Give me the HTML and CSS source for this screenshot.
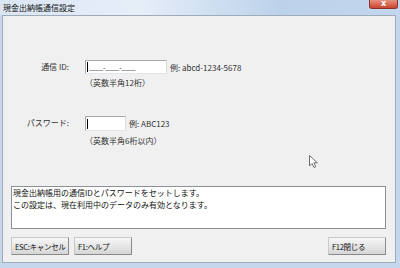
FILE: index.html
```html
<!DOCTYPE html>
<html lang="ja">
<head>
    <meta charset="UTF-8">
    <title>現金出納帳通信設定</title>
    <link rel="stylesheet" href="styles.css">
</head>
<body>
    <div class="window">
        <div class="titlebar">
            <span class="title">現金出納帳通信設定</span>
            <span class="close">x</span>
        </div>
        <div class="client">
            <div class="row row-id">
                <span class="label">通信 ID:</span>
                <div class="field">
                    <div class="line">
                        <span class="input input-id"><span class="caret"></span>____-____-____</span>
                        <span class="example">例: abcd-1234-5678</span>
                    </div>
                    <div class="hint">（英数半角12桁）</div>
                </div>
            </div>
            <div class="row row-pass">
                <span class="label">パスワード:</span>
                <div class="field">
                    <div class="line">
                        <span class="input input-pass"><span class="caret"></span></span>
                        <span class="example">例: ABC123</span>
                    </div>
                    <div class="hint">（英数半角6桁以内）</div>
                </div>
            </div>
            <div class="message">
                <div>現金出納帳用の通信IDとパスワードをセットします。</div>
                <div>この設定は、現在利用中のデータのみ有効となります。</div>
            </div>
            <div class="buttons">
                <button class="btn">ESC:キャンセル</button>
                <button class="btn">F1:ヘルプ</button>
                <span class="spacer"></span>
                <button class="btn">F12閉じる</button>
            </div>
        </div>
        <svg class="pointer" width="11" height="14" viewBox="0 0 11 14">
            <path d="M0.5 0.5 L0.5 11 L3 8.5 L5 12.5 L6.8 11.7 L4.9 7.8 L8.3 7.8 Z" fill="#fff" stroke="#6d6d6d" stroke-width="1"/>
        </svg>
    </div>
</body>
</html>
```

FILE: styles.css
```css
body {
    margin: 0;
    font-family: "Noto Sans CJK JP", "Noto Sans", sans-serif;
    font-size: 8px;
    color: #1e1e1e;
}
.window {
    position: relative;
    width: 400px;
    height: 268px;
    display: flex;
    flex-direction: column;
    background: #c5d7ec;
}
.titlebar {
    height: 15px;
    display: flex;
    justify-content: space-between;
    align-items: flex-start;
    background: linear-gradient(to right, #dbe6f3 0%, #e6eef8 35%, #d3e2f2 50%, #bcd2ea 70%, #c3d6ed 100%);
}
.title {
    margin: 3px 0 0 3px;
    font-size: 8px;
    line-height: 9px;
    color: #111;
}
.close {
    width: 29px;
    height: 9px;
    margin-right: 2px;
    box-sizing: border-box;
    border: 1px solid #8c3328;
    border-top: none;
    border-radius: 0 0 3px 3px;
    background: linear-gradient(#e7907f, #c9452f);
    color: #fff;
    font-family: "DejaVu Sans", sans-serif;
    font-size: 8px;
    font-weight: bold;
    line-height: 7px;
    text-align: center;
}
.client {
    flex: 1;
    margin: 0 4px 5px 2px;
    border: 1px solid #9eabbb;
    background: #f0f0f0;
    display: flex;
    flex-direction: column;
}
.row {
    display: flex;
    align-items: flex-start;
}
.row-id {
    margin-top: 44px;
}
.row-pass {
    margin-top: 28px;
}
.label {
    width: 66px;
    text-align: right;
    margin-right: 16px;
    line-height: 14px;
    color: #333;
}
.line {
    display: flex;
    align-items: center;
}
.input {
    display: flex;
    align-items: center;
    box-sizing: border-box;
    background: #fff;
    border: 1px solid #a6a9b0;
    border-right-color: #dadce0;
    border-bottom-color: #e3e5e8;
    font-size: 7px;
    letter-spacing: -0.4px;
    color: #222;
    overflow: hidden;
}
.input-id {
    width: 82px;
    height: 14px;
}
.input-pass {
    width: 41px;
    height: 15px;
}
.caret {
    width: 1px;
    height: 10px;
    margin: 0 1px 0 1px;
    background: #000;
}
.example {
    margin-left: 3px;
    color: #333;
}
.hint {
    margin-top: 4px;
    line-height: 10px;
    color: #333;
}
.row-pass .hint {
    margin-top: 5px;
}
.message {
    margin: 40px 9px 0 8px;
    height: 43px;
    box-sizing: border-box;
    padding: 0 1px;
    background: #fff;
    border: 1px solid #8c9097;
    font-size: 8px;
    line-height: 11.8px;
    white-space: nowrap;
    color: #111;
}
.buttons {
    display: flex;
    gap: 5px;
    margin: 8px 9px 0 8px;
}
.spacer {
    flex: 1;
}
.btn {
    width: 58px;
    height: 18px;
    padding: 0 3px;
    margin: 0;
    text-align: left;
    white-space: nowrap;
    overflow: hidden;
    font-family: inherit;
    font-size: 7.5px;
    letter-spacing: -0.3px;
    color: #111;
    background: linear-gradient(#f7f7f7, #e6e6e6 50%, #d6d6d6);
    border: 1px solid #c9c9c9;
    border-right-color: #8a8a8a;
    border-bottom-color: #8a8a8a;
    border-radius: 1px;
}
.pointer {
    position: absolute;
    left: 309px;
    top: 155px;
}
```
